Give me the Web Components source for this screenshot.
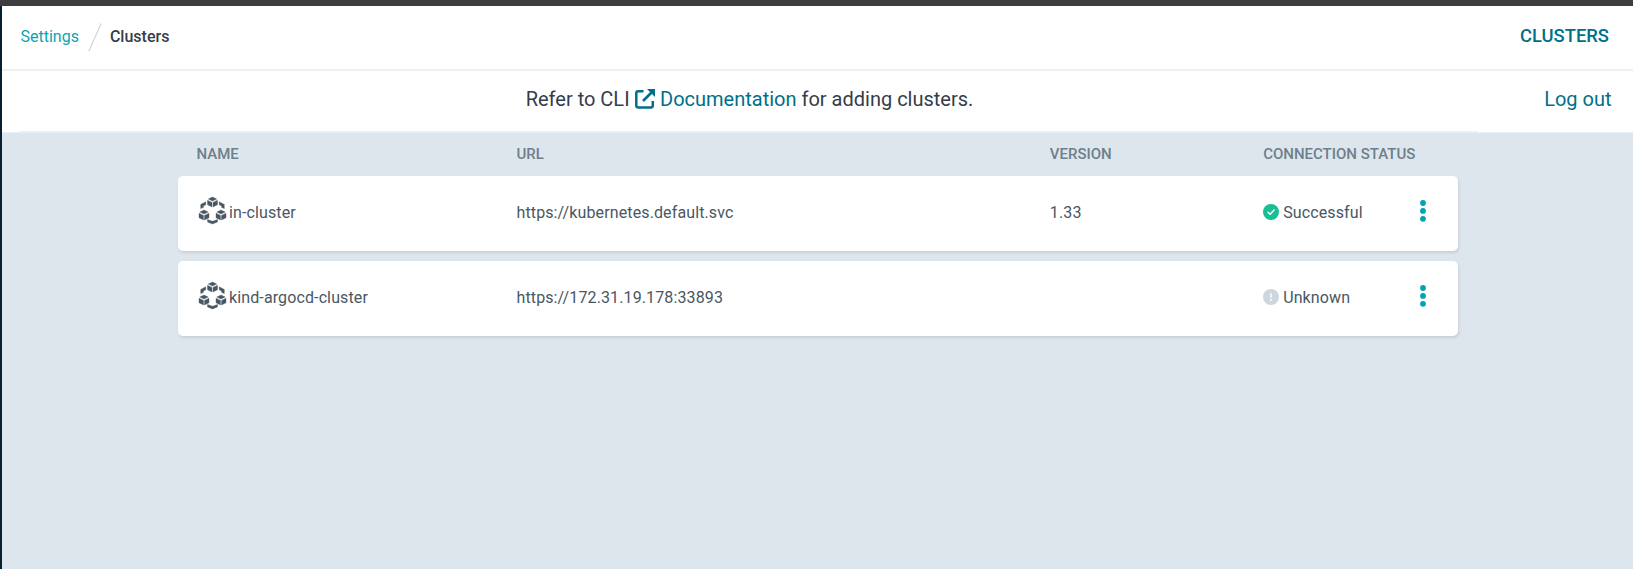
<!DOCTYPE html>
<html lang="en"><head><meta charset="utf-8"><title>Clusters</title>
<style>
html,body{margin:0;height:100%;overflow:hidden}
body{font-family:Roboto,"Liberation Sans",sans-serif;background:#dee6ed;color:#363c4a}
</style></head><body>
<clusters-page></clusters-page>
<script>
const define=(name,html)=>customElements.define(name,class extends HTMLElement{
  constructor(){super();this.attachShadow({mode:'open'}).innerHTML=html;}
});
define('crumb-bar',`<style>
:host{display:flex;box-sizing:border-box;height:65px;padding:0 24px 0 18.5px;border-bottom:2px solid #ebf0f4;background:#fff;justify-content:space-between;font-size:16px;line-height:20px}
.path{display:flex;height:62px;align-items:center}.path a{color:#0da3b2}.path svg{margin:0 8px 0 9px;display:block}.path b{font-weight:500;color:#363c4a}
h1{margin:18px 0 0;font-size:18.4px;line-height:24px;font-weight:500;color:#006f8a}
</style><div class="path"><a><slot name="parent"></slot></a><svg width="14" height="29" viewBox="0 0 14 29"><path d="M.8 28.3 13.2.6" stroke="#cdd7de" stroke-width="1.2" fill="none"/></svg><b><slot name="current"></slot></b></div><h1><slot name="title"></slot></h1>`);
define('doc-bar',`<style>
:host{display:grid;grid-template-columns:18px 1458px 1fr;box-sizing:border-box;height:62px;background:#fff;font-size:20px;line-height:24px;border-bottom:1px solid #ebf0f4}
.msg{grid-column:2;box-sizing:border-box;padding:16px 0 0 1px;text-align:center;border-bottom:1px solid #ebf0f4}
a{color:#006f8a}.out{padding:16px 21.5px 0 0;text-align:right}
svg{width:20px;height:20px;vertical-align:-3px;margin:0 5px 0 .5px}
</style><div class="msg">Refer to CLI <a><svg viewBox="0 0 20 20"><path d="M8.5 2.2H3.2Q1.3 2.2 1.3 4.1V16.6Q1.3 18.5 3.2 18.5H15.9Q17.8 18.5 17.8 16.6V12" fill="none" stroke="currentColor" stroke-width="2.5"/><path d="M8 12 16.5 3.5" stroke="currentColor" stroke-width="2.7"/><path d="M12 0H20V8Z" fill="currentColor"/></svg>Documentation</a> for adding clusters.</div><a class="out">Log out</a>`);
define('cluster-icon',`<style>:host{display:block;width:27px;height:27px}svg{display:block;overflow:visible}</style>
<svg width="27" height="27" viewBox="0 0 27 27" fill="#495763" stroke="#495763" stroke-width=".35"><defs><g id="c"><path d="M5 0 9.2 2 5 4.1.8 2Z"/><path d="M0 3.2 4.5 5.4V10L0 7.8ZM10 3.2 5.5 5.4V10L10 7.8Z"/></g></defs>
<use href="#c" x="8.5"/><use href="#c" x="0" y="13"/><use href="#c" x="17" y="13"/>
<path d="M1.7 11.6V7.4L6.8 4.7V7.7L4.4 9V10.4ZM25.3 11.6V7.4L20.2 4.7V7.7L22.6 9V10.4ZM8.5 22.4 13.5 24.3 18.5 22.4V24.9L13.5 27 8.5 24.9Z"/></svg>`);
define('status-icon',`<style>:host{display:block;width:16px;height:16px;color:#18be94}:host([kind=unknown]){color:#ccd6dd}svg{display:block}.bang,:host([kind=unknown]) .tick{display:none}:host([kind=unknown]) .bang{display:inline}</style>
<svg width="16" height="16" viewBox="0 0 16 16"><circle cx="8" cy="8" r="8" fill="currentColor"/><path class="tick" d="M5 8.2 7.1 10.2 11.1 6.1" fill="none" stroke="#fff" stroke-width="1.5" stroke-linecap="round" stroke-linejoin="round"/><g class="bang" fill="#fff"><rect x="7.25" y="4" width="1.5" height="5" rx=".75"/><circle cx="8" cy="11" r="1"/></g></svg>`);
define('kebab-menu',`<style>:host{display:block;width:6px;height:22px}svg{display:block}</style><svg width="6" height="22" viewBox="0 0 6 22" fill="#00a2b3"><circle cx="3" cy="3" r="2.9"/><circle cx="3" cy="10.9" r="2.9"/><circle cx="3" cy="18.8" r="2.9"/></svg>`);
define('table-head',`<style>:host{display:grid;grid-template-columns:3fr 5fr 2fr 2fr;height:43px;line-height:43px;font-size:15px;font-weight:500;color:#6d7f8b}::slotted(*){padding-left:18.5px;white-space:nowrap}</style><slot></slot>`);
define('cluster-row',`<style>
:host{display:grid;grid-template-columns:3fr 5fr 2fr 2fr;height:75px;margin-bottom:10px;background:#fff;border-radius:5px;box-shadow:1px 2px 3px rgba(0,0,0,.1);font-size:16px;letter-spacing:.12px;line-height:74px;color:#495763}
div{padding-left:18.5px;white-space:nowrap}.flex{display:flex}
cluster-icon{margin:21px 3.5px 0 2px}kebab-menu{margin:23.5px 31.5px 0 auto}
</style><div class="flex"><cluster-icon></cluster-icon><slot name="name"></slot></div><div><slot name="url"></slot></div><div><slot name="version"></slot></div><div class="flex"><slot name="icon"></slot><slot name="status"></slot><kebab-menu></kebab-menu></div>`);
define('clusters-page',`<style>
:host{display:block;box-sizing:border-box;height:569px;border-top:6px solid #3e3c3e;background:#dee6ed}
.body{box-sizing:border-box;height:563px;border-left:2px solid #06202f}
.table{width:1280px;margin-left:176px}
status-icon{margin:28px 3.7px 0 .3px}
</style><div class="body">
<crumb-bar><span slot="parent">Settings</span><span slot="current">Clusters</span><span slot="title">CLUSTERS</span></crumb-bar>
<doc-bar></doc-bar>
<div class="table"><table-head><span>NAME</span><span>URL</span><span>VERSION</span><span>CONNECTION STATUS</span></table-head>
<cluster-row><span slot="name">in-cluster</span><span slot="url">https://kubernetes.default.svc</span><span slot="version">1.33</span><status-icon slot="icon"></status-icon><span slot="status">Successful</span></cluster-row>
<cluster-row><span slot="name">kind-argocd-cluster</span><span slot="url">https://172.31.19.178:33893</span><status-icon slot="icon" kind="unknown"></status-icon><span slot="status">Unknown</span></cluster-row>
</div></div>`);
</script></body></html>
